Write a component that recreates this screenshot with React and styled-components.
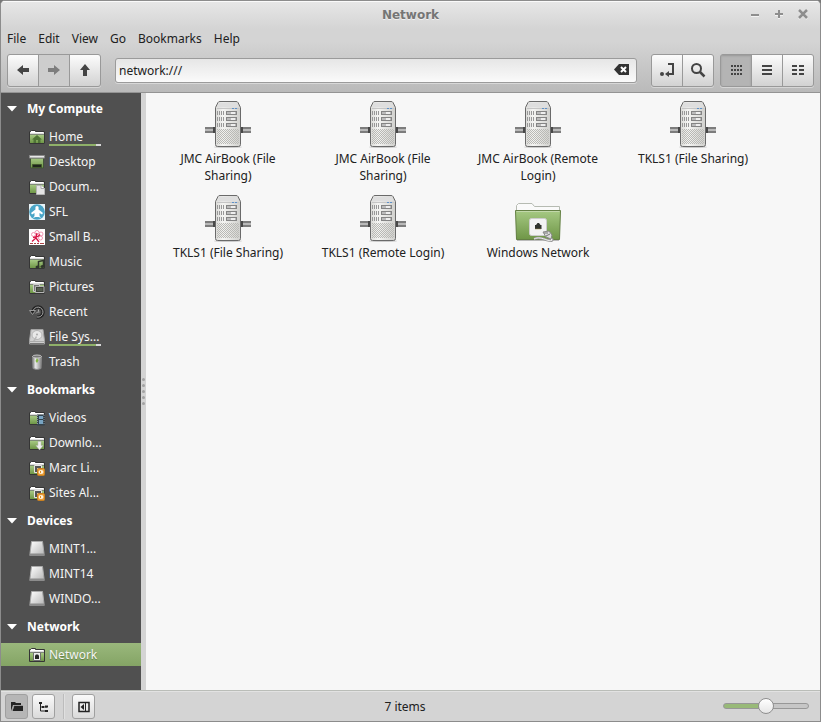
import React, { useState } from "react";
import styled, { createGlobalStyle, css } from "styled-components";

const GlobalStyle = createGlobalStyle`
  * { box-sizing: border-box; }
  body {
    margin: 0;
    background: #777;
    font: 12px/17px "Noto Sans", sans-serif;
    color: #212121;
  }
  button { font: inherit; color: inherit; margin: 0; cursor: default; }
`;

const Window = styled.div`
  min-height: 100vh;
  display: flex;
  flex-direction: column;
  background: #d4d4d4;
  border: 1px solid #8c8c8c;
  border-radius: 5px 5px 0 0;
  overflow: hidden;
`;

const Header = styled.header`
  background: linear-gradient(#e7e7e7 0, #d4d4d4 28px, #d4d4d4 40px, #bababa 100%);
  border-bottom: 1px solid #949494;
  box-shadow: inset 0 1px #fafafa;
`;

const TitleBar = styled.div`
  display: grid;
  grid-template-columns: 1fr auto 1fr;
  align-items: center;
  height: 28px;
  padding: 0 9px;
`;

const Title = styled.h1`
  grid-column: 2;
  margin: 0;
  font: bold 12px/18px "DejaVu Sans", sans-serif;
  color: #757575;
  text-shadow: 0 1px #f0f0f0;
`;

const WindowControls = styled.div`
  display: flex;
  justify-content: flex-end;
  gap: 8px;
`;

const ControlButton = styled.button`
  width: 16px;
  height: 16px;
  padding: 0;
  border: 0;
  background: none;
  svg { display: block; }
`;

const MenuBar = styled.nav`
  display: flex;
  gap: 12px;
  height: 19px;
  padding: 0 6px;
`;

const MenuItem = styled.button`
  padding: 0;
  border: 0;
  background: none;
  line-height: 18px;
`;

const Toolbar = styled.div`
  display: flex;
  align-items: center;
  padding: 6px 6px 5px;
`;

const ButtonGroup = styled.div`
  display: flex;
  border: 1px solid #999;
  border-radius: 3px;
  background: #999;
  gap: 1px;
  overflow: hidden;
  box-shadow: 0 1px #d6d6d6;
`;

const ToolButton = styled.button`
  display: flex;
  align-items: center;
  justify-content: center;
  width: 30px;
  height: 31px;
  padding: 0 0 1px;
  border: 0;
  color: #444;
  background: linear-gradient(#fcfcfc, #d2d2d2);
  ${(p) => p["aria-pressed"] && css`
    background: #b4b4b4;
    box-shadow: inset 0 1px 2px #999;
  `}
  &:disabled { background: #cdcdcd; color: #7d7d7d; }
`;

const LocationField = styled.label`
  flex: 1;
  display: flex;
  align-items: center;
  height: 25px;
  min-width: 0;
  margin: 0 14px;
  padding: 0 6px 1px 3px;
  border: 1px solid #9b9b9b;
  border-radius: 3px;
  background: linear-gradient(#e6e6e6, #fafafa);
  box-shadow: 0 1px #d8d8d8;
`;

const LocationInput = styled.input`
  flex: 1;
  min-width: 0;
  height: 18px;
  padding: 0;
  border: 0;
  outline: 0;
  background: none;
  font: inherit;
  color: #212121;
`;

const Spacer = styled.div`
  width: 6px;
`;

const Body = styled.div`
  flex: 1;
  display: flex;
`;

const Sidebar = styled.aside`
  width: 140px;
  flex: none;
  padding-bottom: 23px;
  background: #505050;
  color: #f5f5f5;
`;

const GroupTitle = styled.button`
  display: flex;
  align-items: center;
  gap: 10px;
  width: 100%;
  height: 31px;
  padding: 0 0 0 6px;
  border: 0;
  background: none;
  color: #fff;
  font-weight: bold;
  white-space: nowrap;
`;

const PlaceList = styled.ul`
  margin: 0;
  padding: 0;
  list-style: none;
`;

const PlaceEntry = styled.li`
  padding: 1px 0;
`;

const Place = styled.button`
  display: flex;
  align-items: center;
  gap: 4px;
  width: 100%;
  height: 23px;
  padding: 1px 0 0 28px;
  border: 0;
  text-align: left;
  background: ${(p) => (p.$selected ? "linear-gradient(#9ab87c, #84a465)" : "none")};
  text-shadow: ${(p) => (p.$selected ? "0 1px 1px #5d7a41" : "none")};
  svg { flex: none; }
`;

const PlaceLabel = styled.span`
  width: 52px;
  height: 22px;
  line-height: 21px;
  white-space: nowrap;
  ${(p) => p.$usage && css`
    background: linear-gradient(90deg, #8fb069 ${p.$usage}%, #d8d8d8 ${p.$usage}%) left bottom 2px / 100% 2px no-repeat;
  `}
`;

const PaneHandle = styled.div`
  width: 5px;
  flex: none;
  display: flex;
  flex-direction: column;
  align-items: center;
  justify-content: center;
  gap: 3px;
  background: #d4d4d4;
`;

const GripDot = styled.i`
  width: 3px;
  height: 3px;
  border-radius: 2px;
  background: #a2a2a2;
`;

const FileGrid = styled.main`
  flex: 1;
  display: grid;
  grid-template-columns: repeat(auto-fill, 155px);
  align-content: start;
  row-gap: 10px;
  padding: 7px 5px;
  background: #f7f7f7;
`;

const FileItem = styled.button`
  display: flex;
  flex-direction: column;
  align-items: center;
  gap: 2px;
  padding: 0 11px 0 10px;
  border: 0;
  background: none;
`;

const FileName = styled.span`
  max-width: 125px;
  text-align: center;
`;

const StatusBar = styled.footer`
  display: flex;
  align-items: center;
  height: 31px;
  padding: 0 11px 0 4px;
  border-top: 1px solid #babdb8;
  box-shadow: inset 0 1px #e2e2e2;
`;

const StatusButton = styled.button`
  display: flex;
  align-items: center;
  justify-content: center;
  width: 23px;
  height: 25px;
  margin-right: 4px;
  padding: 1px 0 0 1px;
  border: 1px solid #a0a0a0;
  border-radius: 3px;
  color: #222;
  background: ${(p) => (p["aria-pressed"] ? "#b6b6b6" : "linear-gradient(#fafafa, #dadada)")};
`;

const Divider = styled.div`
  width: 2px;
  height: 25px;
  margin: 0 7px 0 4px;
  border-left: 1px solid #bcbcbc;
  border-right: 1px solid #e0e0e0;
`;

const StatusText = styled.p`
  flex: 1;
  margin: 0;
  text-align: center;
`;

const track = css`
  height: 6px;
  border: 1px solid #979797;
  border-radius: 3px;
  background: linear-gradient(90deg, #98b978 50%, #c6c6c6 50%);
`;

const ZoomSlider = styled.input`
  appearance: none;
  width: 86px;
  height: 18px;
  margin: 0 0 0 12px;
  background: none;
  &::-webkit-slider-runnable-track { ${track} }
  &::-webkit-slider-thumb {
    appearance: none;
    width: 16px;
    height: 16px;
    margin-top: -6px;
    border: 1px solid #8f8f8f;
    border-radius: 50%;
    background: linear-gradient(#fff, #e6e6e6);
  }
`;

const Icon = ({ size = 16, w = size, h = size, children }) => (
  <svg width={w} height={h} viewBox={`0 0 ${w} ${h}`} aria-hidden="true">{children}</svg>
);

const Folder = ({ children }) => (
  <Icon>
    <path d="M.5 14.500V2.500H2.500V1.500H6.500V2.500H15.500V14.500Z" fill="#dcdcdc" stroke="#353535" />
    <path d="M2 2h4v1h8v1H1.500z" fill="#fff" />
    <path d="M1 5.500h14" stroke="#7f8a78" />
    <path d="M1 6h14v8H1z" fill="url(#folderGreen)" />
    {children}
  </Icon>
);

const LinkBadge = () => (
  <>
    <path d="M5.500 5.500h7v7h-7z" fill="#555" stroke="#e6e6e6" />
    <path d="M8 8h3v3H8z" fill="#ddd" />
    <rect x="8.500" y="8.500" width="7" height="7" rx="1" fill="#e99b35" stroke="#c9801f" />
    <ellipse cx="12" cy="12" rx="2.500" ry="2" fill="#fff4dd" />
    <path d="M11.500 11v2" stroke="#dd8d25" />
  </>
);

const icons = {
  home: <Folder><path d="M3 10.500L8 6l5 4.500h-1.500V14H9v-3H7v3H4.500v-3.500z" fill="#4f7436" /></Folder>,
  desktop: (
    <Icon>
      <path d="M1.500 4h13v10h-13z" fill="url(#folderGreen)" stroke="#43533a" />
      <path d="M.5 1.500h15v2.500H.5z" fill="#e8e8e8" stroke="#8b8b8b" />
      <path d="M3.500 10.500h9v3h-9z" fill="#20261c" stroke="#42592c" />
    </Icon>
  ),
  documents: (
    <Folder>
      <path d="M7.500 6.500H12l3.500 3v6h-8z" fill="#e4e4e4" stroke="#b5b5b5" />
      <path d="M12 6.500v3h3.500" fill="#fff" stroke="#aaa" />
    </Folder>
  ),
  sfl: (
    <Icon>
      <path d="M0 0h16v16H0z" fill="#e9f4f8" />
      <circle cx="8" cy="8" r="7.800" fill="#4aa5c7" />
      <ellipse cx="8" cy="4" rx="1.700" ry="2" fill="#fff" />
      <path d="M7 5h2l5 4-1 1.500L10.500 9v3l1.500 2-2.500-1h-3L4 14l1.500-2V9L3 10.500 2 9z" fill="#fff" />
    </Icon>
  ),
  small: (
    <Icon>
      <path d="M0 0h16v16H0z" fill="#fff" />
      <g fill="none" stroke="#ee7fa2" strokeWidth=".8">
        <circle cx="8" cy="3.500" r="2" /><circle cx="4.500" cy="5.500" r="2" /><circle cx="12" cy="5" r="2" /><circle cx="11.500" cy="9" r="2" />
      </g>
      <path d="M8 4L7 9l-4 3.500M7 9l3 4M4 8.500l5-1 2-2" fill="none" stroke="#d81446" strokeWidth="1.300" />
      <path d="M1 14.500h3m1 0h2m1 0h2m1 0h4" stroke="#a44" />
    </Icon>
  ),
  music: (
    <Folder>
      <path d="M9.500 13V7.500l5-1V12" fill="none" stroke="#30362b" strokeWidth="1.500" />
      <ellipse cx="8.500" cy="13" rx="2" ry="1.500" fill="#30362b" /><ellipse cx="13.500" cy="12.500" rx="2" ry="1.500" fill="#30362b" />
    </Folder>
  ),
  pictures: (
    <Folder>
      <path d="M4.500 5.500h6v7h-6z" fill="#777" stroke="#ccc" />
      <path d="M6.500 7.500h8.500v6H6.500z" fill="#3d4139" stroke="#b5b5b5" />
      <path d="M8 9h5.500v3H8z" fill="#565e50" />
    </Folder>
  ),
  recent: (
    <Icon>
      <path d="M4 8a5 5 0 1 1 4 5" fill="none" stroke="#242424" strokeWidth="3.500" />
      <path d="M4 8a5 5 0 1 1 4 5" fill="none" stroke="#a3a3a3" />
      <path d="M.5 6.500h6l-3 4z" fill="#222" stroke="#999" />
      <path d="M9.500 5.500v2M7 9.500l1.500-1.500h2" stroke="#aaa" fill="none" />
    </Icon>
  ),
  disk: (
    <Icon>
      <path d="M2 .5h12l1.500 11v3.500H.5v-3.500z" fill="#d0d0d0" stroke="#a3a3a3" />
      <ellipse cx="8" cy="6" rx="5" ry="4.500" fill="#e9e9e9" stroke="#b4b4b4" />
      <circle cx="8" cy="5.500" r="1" fill="#aaa" />
      <path d="M4 12l3-5 1 1-2 4z" fill="#b8b8b8" />
      <path d="M1 12.500h14" stroke="#aaa" /><path d="M1 14.500h14" stroke="#777" />
    </Icon>
  ),
  trash: (
    <Icon>
      <path d="M3.500 2.500h9l-.5 12q-4 2-8 0z" fill="url(#metal)" stroke="#888" />
      <ellipse cx="8" cy="2.500" rx="4.500" ry="1.500" fill="#777" stroke="#c5c5c5" />
      <path d="M8 4l1.500 2.500L8 9 6.500 7z" fill="#82b641" />
    </Icon>
  ),
  videos: (
    <Folder>
      <path d="M8 4.500h7.500v11H8z" fill="#34434d" />
      <path d="M10 6h4v3h-4zM10 10h4v4h-4z" fill="#78a4c2" />
      <path d="M8.500 5v10M15 5v10" stroke="#8b979e" strokeDasharray="1 1" />
    </Folder>
  ),
  downloads: <Folder><path d="M9 6.500h3v4h2L10.500 15 7 10.500h2z" fill="#eee" stroke="#bbb" strokeWidth=".5" /></Folder>,
  link: <Folder><LinkBadge /></Folder>,
  drive: (
    <Icon>
      <path d="M2.500.5h11l1.500 12v2H1v-2z" fill="url(#drive)" stroke="#aaa" />
      <path d="M1 12.500h14l.5 2.500H.5z" fill="#8c8c8c" />
    </Icon>
  ),
  network: (
    <Folder>
      <path d="M4.500 5.500h7v8h-7z" fill="#eee" stroke="#707070" />
      <path d="M6 8.500L7 7.500h2l1 1V12H6z" fill="#252525" />
    </Folder>
  ),
};

const Server = () => (
  <Icon size={48}>
    <path d="M1 28h46M1 32h46" stroke="#555" strokeWidth="1.500" />
    <path d="M1 30h46" stroke="#b9b9b9" strokeWidth="2" />
    <path d="M9 27h3v6H9zM36 27h3v6h-3z" fill="#484848" />
    <ellipse cx="24" cy="47" rx="14" ry="1" fill="#ccc" />
    <path d="M11.500 7.500L14 2.500Q14.500 1.500 16 1.500H32Q33.500 1.500 34 2.500L36.500 7.500V44.500Q36.500 46.500 34.500 46.500H13.500Q11.500 46.500 11.500 44.500Z" fill="url(#serverBody)" stroke="#6a6a6a" />
    <path d="M15 2.500h18l2 5H13z" fill="#dedede" />
    <path d="M13 8.500h22" stroke="#c5c5c5" />
    <path d="M28 8.500h2m1 0h2" stroke="#5d91c9" />
    {[11, 17, 23].map((y) => (
      <g key={y}>
        <path d={`M13 ${y + 2}h8`} stroke="#989898" strokeWidth="4" strokeDasharray="1 1" />
        <rect x="22.500" y={y + 0.5} width="10" height="3" fill="#bbb" stroke="#858585" />
        <path d={`M27 ${y + 2}h4`} stroke="#eee" strokeWidth="2" />
      </g>
    ))}
    <path d="M13 29h22v15H13z" fill="url(#mesh)" />
  </Icon>
);

const WindowsFolder = () => (
  <Icon size={48}>
    <path d="M2.500 45V11.500L4.500 9.500H18L20.500 12.500H45.500V45Z" fill="#fafafa" stroke="#b6bbb2" />
    <path d="M1.500 16.500h45l-1 29h-43z" fill="url(#folderGreen)" stroke="#648044" />
    <path d="M2.500 17.500h43" stroke="#c2d8aa" />
    <path d="M3 46.500h42" stroke="#bbb" />
    <rect x="15.500" y="24.500" width="17" height="17" rx="2" fill="#f3f3f3" stroke="#ccc" />
    <path d="M21 31h1l1.500-2h1.500l1.500 2h1v4h-6.500z" fill="#30332d" />
    <path d="M21.500 35h6" stroke="#a99650" strokeDasharray="1 1" />
    <path d="M35 44c5 1 4 4-2 2-5-2-9-3-13-1M36 44l3 3" fill="none" stroke="#999" strokeWidth="2.500" />
    <path d="M35 44c5 1 4 4-2 2-5-2-9-3-13-1M36 44l2 2" fill="none" stroke="#f2f2f2" />
    <path d="M29 38l6-1 3 4-1 4-5-2z" fill="#ddd" stroke="#888" />
    <path d="M31 38v2m2-2v2M32 42l4-2" stroke="#777" />
  </Icon>
);

const SharedPaints = () => (
  <svg width="0" height="0" aria-hidden="true" display="block">
    <defs>
      <linearGradient id="folderGreen" x2="0" y2="1"><stop stopColor="#a6c983" /><stop offset="1" stopColor="#6f9647" /></linearGradient>
      <linearGradient id="metal"><stop stopColor="#808080" /><stop offset=".35" stopColor="#e8e8e8" /><stop offset="1" stopColor="#858585" /></linearGradient>
      <linearGradient id="drive" x2="1" y2="1"><stop stopColor="#fff" /><stop offset="1" stopColor="#b5b5b5" /></linearGradient>
      <linearGradient id="serverBody"><stop stopColor="#d9d9d6" /><stop offset=".3" stopColor="#f5f5f3" /><stop offset="1" stopColor="#d0d0cd" /></linearGradient>
      <pattern id="mesh" width="2" height="2" patternUnits="userSpaceOnUse"><path d="M0 0h1v1H0zM1 1h1v1H1z" fill="#b9b9b5" /></pattern>
    </defs>
  </svg>
);

const groups = [
  ["My Compute", [
    ["Home", "home", 90], ["Desktop", "desktop"], ["Docum...", "documents"], ["SFL", "sfl"],
    ["Small B...", "small"], ["Music", "music"], ["Pictures", "pictures"], ["Recent", "recent"],
    ["File Sys...", "disk", 90], ["Trash", "trash"],
  ]],
  ["Bookmarks", [["Videos", "videos"], ["Downlo...", "downloads"], ["Marc Li...", "link"], ["Sites Al...", "link"]]],
  ["Devices", [["MINT1...", "drive"], ["MINT14", "drive"], ["WINDO...", "drive"]]],
  ["Network", [["Network", "network"]]],
];

const files = [
  "JMC AirBook (File Sharing)", "JMC AirBook (File Sharing)", "JMC AirBook (Remote Login)",
  "TKLS1 (File Sharing)", "TKLS1 (File Sharing)", "TKLS1 (Remote Login)", "Windows Network",
];

const arrow = "M2 8l6-5v3h6v4H8v3z";

export default function App() {
  const [location, setLocation] = useState("network:///");
  const [zoom, setZoom] = useState(50);
  return (
    <Window>
      <GlobalStyle />
      <Header>
        <TitleBar>
          <Title>Network</Title>
          <WindowControls>
            <ControlButton aria-label="Minimize"><Icon><path d="M4 9.500h8" stroke="#f3f3f3" /><path d="M4 8h8" stroke="#8e8e8e" strokeWidth="2" /></Icon></ControlButton>
            <ControlButton aria-label="Maximize"><Icon><path d="M4 8h8M8 4v8" stroke="#f3f3f3" strokeWidth="2" /><path d="M4 7h8M8 3v8" stroke="#8e8e8e" strokeWidth="2" /></Icon></ControlButton>
            <ControlButton aria-label="Close"><Icon><path d="M4 4l8 8M12 4l-8 8" stroke="#f3f3f3" strokeWidth="2" /><path d="M4 3l8 8M12 3l-8 8" stroke="#8e8e8e" strokeWidth="2.500" /></Icon></ControlButton>
          </WindowControls>
        </TitleBar>
        <MenuBar aria-label="Main menu">
          {["File", "Edit", "View", "Go", "Bookmarks", "Help"].map((m) => <MenuItem key={m}>{m}</MenuItem>)}
        </MenuBar>
        <Toolbar>
          <ButtonGroup>
            <ToolButton aria-label="Back"><Icon><path d={arrow} fill="currentColor" /></Icon></ToolButton>
            <ToolButton aria-label="Forward" disabled><Icon><path d={arrow} transform="rotate(180 8 8)" fill="currentColor" /></Icon></ToolButton>
            <ToolButton aria-label="Up"><Icon><path d={arrow} transform="rotate(90 8 8)" fill="currentColor" /></Icon></ToolButton>
          </ButtonGroup>
          <LocationField>
            <LocationInput aria-label="Location" value={location} onChange={(e) => setLocation(e.target.value)} />
            <ControlButton aria-label="Clear" onClick={() => setLocation("")}>
              <Icon><path d="M0 7.500L5 2h10v11H5z" fill="#333" /><path d="M7 5l5 5M12 5l-5 5" stroke="#fff" strokeWidth="2" /></Icon>
            </ControlButton>
          </LocationField>
          <ButtonGroup>
            <ToolButton aria-label="Toggle location entry"><Icon><circle cx="3" cy="12" r="2" fill="currentColor" /><path d="M9 2h5v10H9" fill="none" stroke="currentColor" strokeWidth="2" /><path d="M6 12l4-3v6z" fill="currentColor" /></Icon></ToolButton>
            <ToolButton aria-label="Search"><Icon><circle cx="6.500" cy="6.500" r="4.500" fill="none" stroke="currentColor" strokeWidth="2" /><path d="M10 10l4.500 4.500" stroke="currentColor" strokeWidth="2.500" /></Icon></ToolButton>
          </ButtonGroup>
          <Spacer />
          <ButtonGroup>
            <ToolButton aria-label="Icon view" aria-pressed={true}><Icon><path d="M3 4h11M3 8h11M3 12h11" stroke="currentColor" strokeWidth="2" strokeDasharray="2 1" /></Icon></ToolButton>
            <ToolButton aria-label="List view"><Icon><path d="M3 4h10M3 8h10M3 12h10" stroke="currentColor" strokeWidth="2" /></Icon></ToolButton>
            <ToolButton aria-label="Compact view"><Icon><path d="M2 4h5M9 4h5M2 8h5M9 8h5M2 12h5M9 12h5" stroke="currentColor" strokeWidth="2" /></Icon></ToolButton>
          </ButtonGroup>
        </Toolbar>
      </Header>
      <Body>
        <Sidebar>
          {groups.map(([title, places]) => (
            <section key={title}>
              <GroupTitle aria-expanded="true">
                <Icon w={10} h={6}><path d="M0 0h10L5 5.500z" fill="#fff" /></Icon>
                {title}
              </GroupTitle>
              <PlaceList>
                {places.map(([name, icon, usage]) => (
                  <PlaceEntry key={name}>
                    <Place $selected={icon === "network"}>
                      {icons[icon]}
                      <PlaceLabel $usage={usage}>{name}</PlaceLabel>
                    </Place>
                  </PlaceEntry>
                ))}
              </PlaceList>
            </section>
          ))}
        </Sidebar>
        <PaneHandle>{[0, 1, 2, 3, 4].map((d) => <GripDot key={d} />)}</PaneHandle>
        <FileGrid>
          {files.map((name, i) => (
            <FileItem key={i}>
              {name === "Windows Network" ? <WindowsFolder /> : <Server />}
              <FileName>{name}</FileName>
            </FileItem>
          ))}
        </FileGrid>
      </Body>
      <StatusBar>
        <StatusButton aria-label="Show places" aria-pressed={true}><Icon><path d="M2 12V3h4l1 1h5v2H4z" fill="#222" /><path d="M5 7h9v5H3.500z" fill="#222" /><path d="M3 12l2-5.500h9" fill="none" stroke="#999" /></Icon></StatusButton>
        <StatusButton aria-label="Show tree"><Icon><path d="M4.500 3v9H12M4.500 8H11" fill="none" stroke="#222" /><path d="M3 3h3v2H3zM9 6.500h3v2H9zM9 11h3v2H9zM6 7h2v2H6z" fill="#222" /></Icon></StatusButton>
        <Divider />
        <StatusButton aria-label="Hide sidebar"><Icon><path d="M3 3.500h10v9H3z" fill="none" stroke="#222" strokeWidth="1.500" /><path d="M8 5v6L4.500 8z" fill="#222" /><path d="M9.500 4v8" stroke="#222" /></Icon></StatusButton>
        <StatusText>7 items</StatusText>
        <ZoomSlider type="range" aria-label="Zoom" value={zoom} onChange={(e) => setZoom(Number(e.target.value))} />
      </StatusBar>
      <SharedPaints />
    </Window>
  );
}
